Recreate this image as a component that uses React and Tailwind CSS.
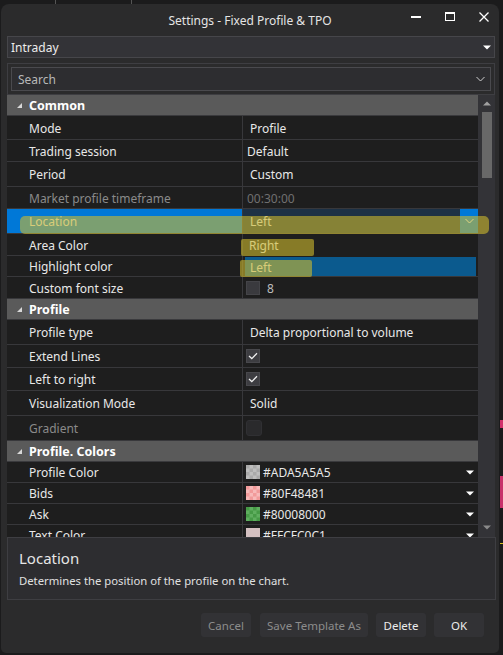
import React from "react";

function DownTri({ className = "" }) {
  return (
    <svg width="8" height="5" viewBox="0 0 8 5" className={className}>
      <path d="M0 0.5H8L4 4.5Z" fill="currentColor" />
    </svg>
  );
}

function UpTri({ className = "" }) {
  return (
    <svg width="8" height="5" viewBox="0 0 8 5" className={className}>
      <path d="M0 4.5H8L4 0.5Z" fill="currentColor" />
    </svg>
  );
}

function Chevron({ className = "" }) {
  return (
    <svg width="9" height="6" viewBox="0 0 9 6" className={className}>
      <path d="M0.5 1L4.5 5L8.5 1" fill="none" stroke="currentColor" strokeWidth="1" />
    </svg>
  );
}

function Header({ h, title }) {
  return (
    <div className={`${h} shrink-0 bg-[#5a5a5a] flex items-center border-b border-[#3a3a3d]`}>
      <svg width="5" height="5" viewBox="0 0 5 5" className="ml-[10px] mr-[7px] mt-[1px]">
        <path d="M5 0V5H0Z" fill="#d8d8d8" />
      </svg>
      <span className="font-bold text-white text-[12.5px] pt-[2px]">{title}</span>
    </div>
  );
}

function Row({ h, label, labelCls = "", valueCls = "", noValBorder = false, children }) {
  return (
    <div className={`${h} shrink-0 flex`}>
      <div
        className={`w-[236px] shrink-0 border-r border-b border-[#38383b] flex items-center pl-[22px] pt-[2px] ${labelCls}`}
      >
        {label}
      </div>
      <div
        className={`flex-1 flex items-center ${noValBorder ? "" : "border-b border-[#38383b]"} ${valueCls}`}
      >
        {children}
      </div>
    </div>
  );
}

function Check() {
  return (
    <div className="w-[14px] h-[14px] bg-[#3d3d41] border border-[#48484c] flex items-center justify-center">
      <svg width="10" height="8" viewBox="0 0 10 8">
        <path d="M1 4L3.8 6.6L9 1.2" fill="none" stroke="#f0f0f0" strokeWidth="1.3" />
      </svg>
    </div>
  );
}

function Swatch({ a, b }) {
  return (
    <svg width="14" height="14" viewBox="0 0 14 14" className="shrink-0">
      <rect width="14" height="14" fill={a} />
      <rect x="0" y="0" width="3.5" height="3.5" fill={b} />
      <rect x="7" y="0" width="3.5" height="3.5" fill={b} />
      <rect x="3.5" y="3.5" width="3.5" height="3.5" fill={b} />
      <rect x="10.5" y="3.5" width="3.5" height="3.5" fill={b} />
      <rect x="0" y="7" width="3.5" height="3.5" fill={b} />
      <rect x="7" y="7" width="3.5" height="3.5" fill={b} />
      <rect x="3.5" y="10.5" width="3.5" height="3.5" fill={b} />
      <rect x="10.5" y="10.5" width="3.5" height="3.5" fill={b} />
    </svg>
  );
}

function ColorVal({ a, b, text }) {
  return (
    <div className="flex items-center w-full pl-[3px] pr-[4px]">
      <Swatch a={a} b={b} />
      <span className="ml-[3px] pt-[2px]">{text}</span>
      <DownTri className="ml-auto text-white" />
    </div>
  );
}

export default function App() {
  return (
    <div className="relative w-[503px] h-[655px] bg-[#1b1b1c] overflow-hidden font-['Noto_Sans',sans-serif] text-[12px] text-[#e8e8e8]">
      {/* background chart marks */}
      <div className="absolute left-[55px] top-0 w-[1px] h-[4px] bg-[#555]" />
      <div className="absolute left-[131px] top-0 w-[1px] h-[4px] bg-[#555]" />
      <div className="absolute left-[500px] top-[420px] w-[3px] h-[8px] bg-[#d0306a]" />
      <div className="absolute left-[500px] top-[476px] w-[3px] h-[32px] bg-[#c8306a]" />
      <div className="absolute left-[500px] top-[543px] w-[3px] h-[1px] bg-[#d8c020]" />

      <div className="ml-[1px] mt-[4px] w-[498px] h-[649px] bg-[#2b2b2c] rounded-t-[8px] rounded-b-[5px] flex flex-col">
        {/* title bar */}
        <div className="h-[32px] shrink-0 grid grid-cols-[1fr_auto_1fr] items-center">
          <div />
          <div className="text-[12px] pt-[1px] text-[#e4e4e4]">Settings - Fixed Profile &amp; TPO</div>
          <div className="flex justify-end items-center gap-[24px] pr-[10px] pb-[7px]">
            <div className="w-[10px] h-[2px] bg-white" />
            <div className="w-[10px] h-[9px] border border-white border-t-2" />
            <svg width="10" height="10" viewBox="0 0 10 10">
              <path d="M0.5 0.5L9.5 9.5M9.5 0.5L0.5 9.5" stroke="white" strokeWidth="1.3" />
            </svg>
          </div>
        </div>

        {/* template dropdown */}
        <div className="ml-[6px] mr-[4px] h-[22px] shrink-0 bg-[#333337] border border-[#46464a] flex items-center justify-between pl-[3px] pr-[3px]">
          <span className="text-[#ececec] pt-[1px]">Intraday</span>
          <DownTri className="text-white" />
        </div>

        {/* panel */}
        <div className="ml-[6px] mr-[4px] mt-[5px] flex flex-col shrink-0">
          <div className="h-[32px] border border-[#3e3e42] p-[3px]">
            <div className="h-full bg-[#2d2d30] border border-[#4a4a4e] flex items-center justify-between pl-[6px] pr-[5px]">
              <span className="text-[#b8b8b8] pt-[1px]">Search</span>
              <Chevron className="text-[#cfcfcf]" />
            </div>
          </div>

          <div className="relative h-[442px] flex">
            <div className="w-[471px] h-full overflow-hidden bg-[#1e1e1e] flex flex-col">
              <Header h="h-[21px]" title="Common" />
              <Row h="h-[24px]" label="Mode" valueCls="pl-[7px] pt-[2px]">Profile</Row>
              <Row h="h-[22px]" label="Trading session" valueCls="pl-[4px] pt-[2px]">Default</Row>
              <Row h="h-[25px]" label="Period" valueCls="pl-[7px] pt-[2px]">Custom</Row>
              <Row h="h-[22px]" label="Market profile timeframe" labelCls="text-[#8a8a8a]" valueCls="pl-[4px] pt-[2px] text-[#707070]">
                00:30:00
              </Row>
              <Row h="h-[25px]" label="Location" labelCls="bg-[#0078d7]" valueCls="bg-[#1d3145]">
                <div className="flex items-center w-full h-full">
                  <span className="pl-[7px] pt-[2px]">Left</span>
                  <div className="ml-auto w-[18px] h-full bg-[#0078d7] flex items-center justify-center">
                    <Chevron className="text-white" />
                  </div>
                </div>
              </Row>
              <Row h="h-[22px]" label="Area Color" noValBorder valueCls="pl-[6px] pt-[2px]">
                Right
              </Row>
              <Row h="h-[21px]" label="Highlight color" valueCls="items-stretch">
                <div className="flex-1 ml-[2px] mr-[2px] mt-[1px] bg-[#0b5a8e] flex items-center pl-[5px] pt-[2px]">Left</div>
              </Row>
              <Row h="h-[22px]" label="Custom font size" valueCls="pl-[3px]">
                <div className="w-[14px] h-[14px] bg-[#3a3a3e] border border-[#444448]" />
                <span className="ml-[7px] pt-[2px] text-[#bdbdbd]">8</span>
              </Row>

              <Header h="h-[21px]" title="Profile" />
              <Row h="h-[25px]" label="Profile type" valueCls="pl-[7px] pt-[2px]">Delta proportional to volume</Row>
              <Row h="h-[23px]" label="Extend Lines" valueCls="pl-[3px]">
                <Check />
              </Row>
              <Row h="h-[23px]" label="Left to right" valueCls="pl-[3px]">
                <Check />
              </Row>
              <Row h="h-[25px]" label="Visualization Mode" valueCls="pl-[7px] pt-[2px]">Solid</Row>
              <Row h="h-[25px]" label="Gradient" labelCls="text-[#8a8a8a]" valueCls="pl-[3px]">
                <div className="w-[16px] h-[16px] rounded-[3px] bg-[#2a2a2c] border border-[#303033]" />
              </Row>

              <Header h="h-[21px]" title="Profile. Colors" />
              <Row h="h-[21px]" label="Profile Color">
                <ColorVal a="#bdbdbd" b="#a9a9a9" text="#ADA5A5A5" />
              </Row>
              <Row h="h-[21px]" label="Bids">
                <ColorVal a="#f7b9b9" b="#f19a9a" text="#80F48481" />
              </Row>
              <Row h="h-[21px]" label="Ask">
                <ColorVal a="#5fae5f" b="#469a46" text="#80008000" />
              </Row>
              <Row h="h-[21px]" label="Text Color">
                <ColorVal a="#d4c0c1" b="#d4c0c1" text="#FFCFC0C1" />
              </Row>
            </div>

            {/* scrollbar */}
            <div className="w-[17px] h-full bg-[#333337] flex flex-col items-center">
              <UpTri className="mt-[6px] text-[#a0a0a0]" />
              <div className="mt-[6px] self-start ml-[4px] w-[10px] h-[66px] bg-[#686868]" />
              <DownTri className="mt-auto mb-[7px] text-[#8a8a8a]" />
            </div>

            {/* highlighter strokes */}
            <div className="absolute left-[13px] top-[121px] w-[469px] h-[18px] rounded-[5px] bg-[rgba(205,185,45,0.6)]" />
            <div className="absolute left-[234px] top-[144px] w-[73px] h-[17px] rounded-[2px] bg-[rgba(205,185,45,0.6)]" />
            <div className="absolute left-[233px] top-[165px] w-[72px] h-[17px] rounded-[2px] bg-[rgba(205,185,45,0.6)]" />
          </div>
        </div>

        {/* description */}
        <div className="ml-[6px] mr-[3px] h-[63px] shrink-0 border border-[#3e3e42] bg-[#2d2d30] pl-[11px] flex flex-col">
          <div className="mt-[10px] text-[15px] leading-[20px] text-[#e6e6e6]">Location</div>
          <div className="mt-[5px] text-[11.3px] leading-[16px] text-[#e0e0e0]">
            Determines the position of the profile on the chart.
          </div>
        </div>

        {/* buttons */}
        <div className="mt-[13px] flex justify-end gap-[8px] pr-[15px] text-[11.5px]">
          <div className="w-[50px] h-[24px] mr-[1px] pt-[1px] rounded-[3px] bg-[#323235] text-[#8c8c8c] flex items-center justify-center">
            Cancel
          </div>
          <div className="w-[108px] h-[24px] pt-[1px] rounded-[3px] bg-[#323235] text-[#8c8c8c] flex items-center justify-center">
            Save Template As
          </div>
          <div className="w-[50px] h-[24px] pt-[1px] rounded-[3px] bg-[#323235] text-[#ececec] flex items-center justify-center">
            Delete
          </div>
          <div className="w-[50px] h-[24px] pt-[1px] rounded-[3px] bg-[#323235] text-[#ececec] flex items-center justify-center">
            OK
          </div>
        </div>
      </div>
    </div>
  );
}
